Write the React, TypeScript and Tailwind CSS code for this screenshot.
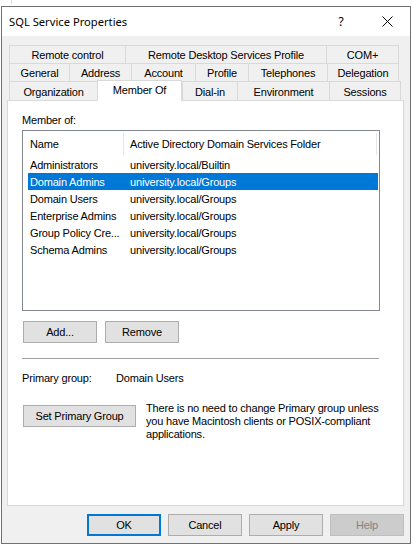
import React from "react";

const tabRows = [
  [
    { label: "Remote control", w: 116 },
    { label: "Remote Desktop Services Profile", w: 201 },
    { label: "COM+", w: 73 },
  ],
  [
    { label: "General", w: 60 },
    { label: "Address", w: 62 },
    { label: "Account", w: 64 },
    { label: "Profile", w: 53 },
    { label: "Telephones", w: 79 },
    { label: "Delegation", w: 72 },
  ],
  [
    { label: "Organization", w: 88 },
    { label: "Member Of", w: 85, active: true },
    { label: "Dial-in", w: 55 },
    { label: "Environment", w: 92 },
    { label: "Sessions", w: 72 },
  ],
];

const groups = [
  { name: "Administrators", folder: "university.local/Builtin" },
  { name: "Domain Admins", folder: "university.local/Groups", selected: true },
  { name: "Domain Users", folder: "university.local/Groups" },
  { name: "Enterprise Admins", folder: "university.local/Groups" },
  { name: "Group Policy Cre...", folder: "university.local/Groups" },
  { name: "Schema Admins", folder: "university.local/Groups" },
];

function Button({ children, className = "" }: { children: React.ReactNode; className?: string }) {
  return (
    <div
      className={
        "h-[22px] flex items-center justify-center border border-[#adadad] bg-[#e1e1e1] text-black " +
        className
      }
    >
      {children}
    </div>
  );
}

export default function App() {
  return (
    <div className="relative w-[413px] h-[547px] bg-white pt-[6px] pl-[1px] font-['Liberation_Sans',Arial,sans-serif] text-[11px] leading-[13px] tracking-[-0.18px] text-black">
      {/* stray mark above the window */}
      <div className="absolute left-[11px] top-0 w-px h-[4px] bg-[#dcdcdc]" />

      <div className="w-[410px] h-[538px] border border-[#717171] flex flex-col bg-[#f0f0f0]">
        {/* Title bar */}
        <div className="h-[29px] bg-white flex items-center shrink-0">
          <span className="pl-[7px] font-['Noto_Sans',sans-serif] text-[11.2px] tracking-normal text-black">
            SQL Service Properties
          </span>
          <div className="flex-1" />
          <div className="w-[46px] h-full flex items-center justify-center font-['Noto_Sans',sans-serif] text-[12px]">
            ?
          </div>
          <div className="w-[46px] h-full flex items-center justify-center">
            <svg width="11" height="11" viewBox="0 0 11 11" fill="none" stroke="#000" strokeWidth="1">
              <line x1="0.5" y1="0.5" x2="10.5" y2="10.5" />
              <line x1="10.5" y1="0.5" x2="0.5" y2="10.5" />
            </svg>
          </div>
        </div>

        {/* Body */}
        <div className="flex-1 flex flex-col pt-[9px] px-[5px]">
          {/* Tabs */}
          <div className="ml-[2px] flex flex-col">
            {tabRows.map((row, ri) => (
              <div key={ri} className={"flex " + (ri === 2 ? "h-[19px]" : "h-[18px]")}>
                {row.map((t, i) =>
                  t.active ? (
                    <div
                      key={t.label}
                      style={{ width: t.w }}
                      className="relative z-10 -mt-[1px] h-[21px] bg-white border-t border-l border-r border-[#d9d9d9] flex items-start justify-center pt-[3px]"
                    >
                      {t.label}
                    </div>
                  ) : (
                    <div
                      key={t.label}
                      style={{ width: t.w }}
                      className={
                        "h-full border-t border-l border-[#d9d9d9] flex items-center justify-center pt-[2px] " +
                        (i === row.length - 1 ? "border-r" : "")
                      }
                    >
                      {t.label}
                    </div>
                  )
                )}
              </div>
            ))}
          </div>

          {/* Tab panel */}
          <div className="w-[397px] h-[406px] bg-white border border-[#d9d9d9] pt-[13px] pl-[14px] flex flex-col">
            <div>Member of:</div>

            {/* List view */}
            <div className="mt-[3px] w-[358px] h-[181px] border border-[#828790] flex flex-col">
              <div className="h-[25px] flex items-center">
                <div className="w-[100px] pl-[7px] h-full flex items-center pt-px">Name</div>
                <div className="w-px h-[22px] bg-[#e5e5e5]" />
                <div className="pl-[6px] w-[252px] h-full flex items-center pt-px">
                  Active Directory Domain Services Folder
                </div>
                <div className="w-px h-[22px] bg-[#e5e5e5]" />
              </div>
              <div className="pl-[5px] pr-px flex flex-col">
                {groups.map((g) => (
                  <div
                    key={g.name}
                    className={
                      "h-[17px] flex items-center pt-px " +
                      (g.selected ? "bg-[#0078d7] text-white" : "")
                    }
                  >
                    <div className="w-[102px] pl-[2px] whitespace-nowrap overflow-hidden">{g.name}</div>
                    <div className="whitespace-nowrap">{g.folder}</div>
                  </div>
                ))}
              </div>
            </div>

            {/* Add / Remove */}
            <div className="mt-[10px] ml-px flex gap-[8px]">
              <Button className="w-[74px]">Add...</Button>
              <Button className="w-[74px]">Remove</Button>
            </div>

            <div className="mt-[15px] w-[357px] h-px bg-[#a0a0a0]" />

            <div className="mt-[13px] flex">
              <div className="w-[94px]">Primary group:</div>
              <div>Domain Users</div>
            </div>

            <div className="mt-[17px] flex items-start">
              <Button className="w-[113px] ml-px mt-[3px]">Set Primary Group</Button>
              <p className="ml-[10px] whitespace-nowrap">
                There is no need to change Primary group unless
                <br />
                you have Macintosh clients or POSIX-compliant
                <br />
                applications.
              </p>
            </div>
          </div>

          {/* Dialog buttons */}
          <div className="mt-[8px] w-[397px] flex justify-end gap-[7px]">
            <div className="w-[74px] h-[22px] flex items-center justify-center border-2 border-[#0078d7] bg-[#e1e1e1]">
              OK
            </div>
            <Button className="w-[74px]">Cancel</Button>
            <Button className="w-[74px]">Apply</Button>
            <div className="w-[74px] h-[22px] flex items-center justify-center border border-[#bfbfbf] bg-[#cccccc] text-[#838383]">
              Help
            </div>
          </div>
        </div>
      </div>
    </div>
  );
}
